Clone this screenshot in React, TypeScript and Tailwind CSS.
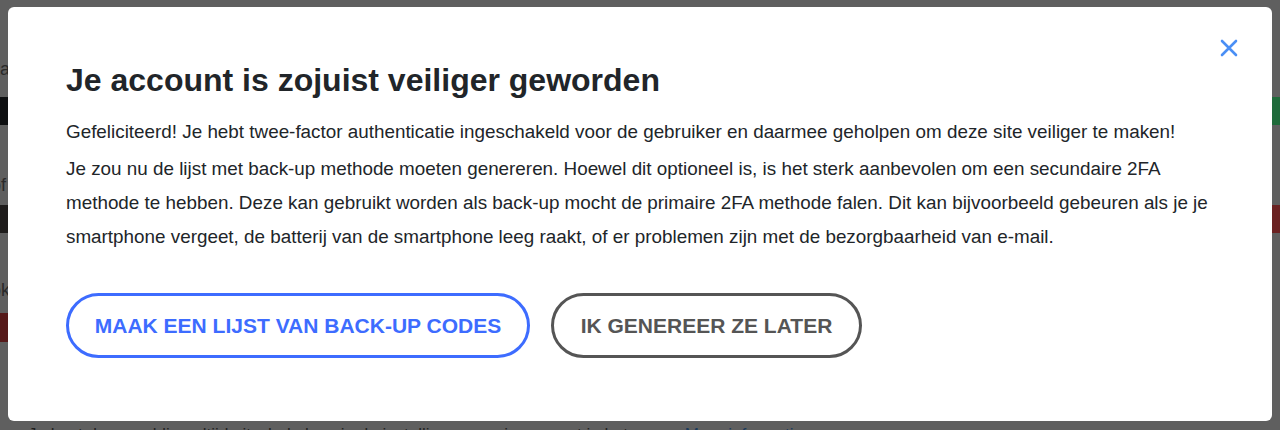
export default function App() {
  return (
    <div className="relative h-[430px] w-[1280px] overflow-hidden bg-[#5f5f5f] font-['Liberation_Sans',Arial,sans-serif]">
      {/* page behind the overlay */}
      <div className="flex flex-col">
        <div className="h-[97px] pt-[56px] text-[18px] text-[#2a2a2a] -ml-[4px]">ja</div>
        <div className="flex h-[28px]">
          <div className="w-1/2 bg-[#0e0f11]" />
          <div className="w-1/2 bg-[#1f6b3b]" />
        </div>
        <div className="h-[80px] pt-[47px] text-[18px] text-[#2a2a2a] -ml-[9px]">of</div>
        <div className="flex h-[28px]">
          <div className="w-1/2 bg-[#1f1d1c]" />
          <div className="w-1/2 bg-[#6b2222]" />
        </div>
        <div className="h-[80px] pt-[44px] text-[18px] text-[#2a2a2a] -ml-[9px]">ok</div>
        <div className="flex h-[29px]">
          <div className="w-1/2 bg-[#561a1a]" />
          <div className="w-1/2" />
        </div>
        <div className="pt-[80px] pl-[28px] text-[17px] text-[#1f1f1f] whitespace-nowrap">
          Je kunt deze melding altijd uitschakelen via de instellingen van je account in het menu.{" "}
          <span className="text-[#1a3a5c]">Meer informatie</span>
        </div>
      </div>

      {/* modal */}
      <div className="absolute left-[8px] top-[7px] h-[414px] w-[1264px] rounded-[6px] bg-white px-[58px] pt-[54px]">
        <button className="absolute right-[34px] top-[32px] text-[#4a8ff5]">
          <svg width="18" height="18" viewBox="0 0 18 18" fill="none">
            <path d="M2 2L16 16M16 2L2 16" stroke="currentColor" strokeWidth="2.6" strokeLinecap="round" />
          </svg>
        </button>

        <h2 className="text-[32px] font-bold leading-[38px] text-[#212529]">
          Je account is zojuist veiliger geworden
        </h2>

        <div className="mt-[16px] text-[18.85px] leading-[34px] text-[#212529]">
          <p className="mb-[3px]">
            Gefeliciteerd! Je hebt twee-factor authenticatie ingeschakeld voor de gebruiker en daarmee geholpen om deze site veiliger te maken!
          </p>
          <p>
            Je zou nu de lijst met back-up methode moeten genereren. Hoewel dit optioneel is, is het sterk aanbevolen om een secundaire 2FA methode te hebben. Deze kan gebruikt worden als back-up mocht de primaire 2FA methode falen. Dit kan bijvoorbeeld gebeuren als je je smartphone vergeet, de batterij van de smartphone leeg raakt, of er problemen zijn met de bezorgbaarheid van e-mail.
          </p>
        </div>

        <div className="mt-[39px] flex gap-[21px]">
          <button className="h-[65px] w-[464px] rounded-full border-[3px] border-[#3d6cff] text-[21px] font-bold text-[#3d6cff]">
            MAAK EEN LIJST VAN BACK-UP CODES
          </button>
          <button className="h-[65px] w-[311px] rounded-full border-[3px] border-[#555555] text-[21px] font-bold text-[#555555]">
            IK GENEREER ZE LATER
          </button>
        </div>
      </div>
    </div>
  );
}
